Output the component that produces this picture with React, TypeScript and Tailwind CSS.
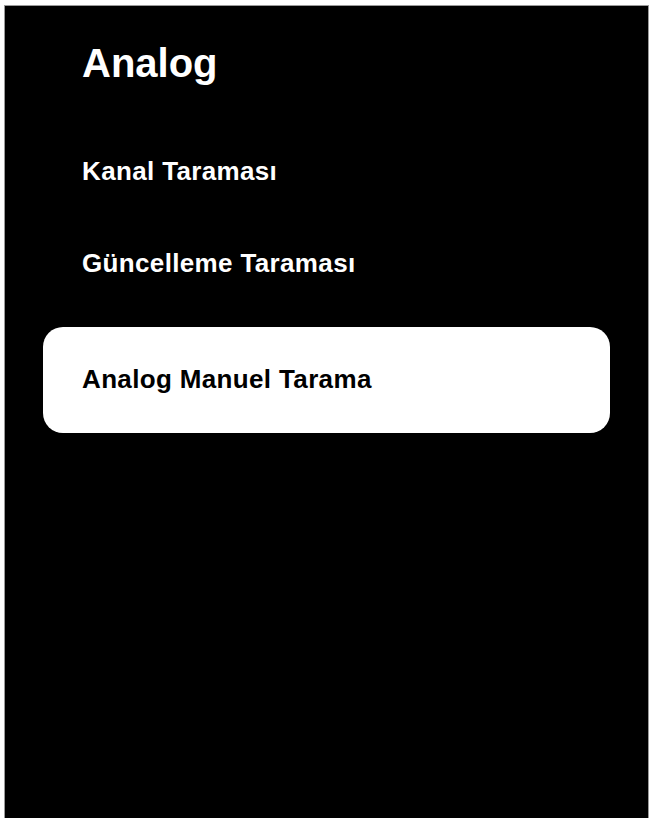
export default function App() {
  return (
    <div className="w-[651px] h-[818px] bg-white overflow-hidden" style={{ fontFamily: '"Liberation Sans", Arial, Helvetica, sans-serif' }}>
      <div className="ml-[4px] mt-[5px] w-[645px] h-[813px] border border-b-0 border-[#9a9a9a] bg-black flex flex-col">
        <div className="pt-[33px] pl-[77px] text-white font-bold text-[40px] leading-[48px]">Analog</div>
        <div className="mt-[69px] pl-[77px] text-white font-bold text-[26px] leading-[30px] tracking-[0.35px]">Kanal Taraması</div>
        <div className="mt-[62px] pl-[77px] text-white font-bold text-[26px] leading-[30px] tracking-[0.35px]">Güncelleme Taraması</div>
        <div className="mt-[49px] ml-[38px] w-[567px] h-[106px] rounded-[20px] bg-white pt-[37px] pl-[39px] text-black font-bold text-[26px] leading-[30px] tracking-[0.35px]">
          Analog Manuel Tarama
        </div>
      </div>
    </div>
  );
}
